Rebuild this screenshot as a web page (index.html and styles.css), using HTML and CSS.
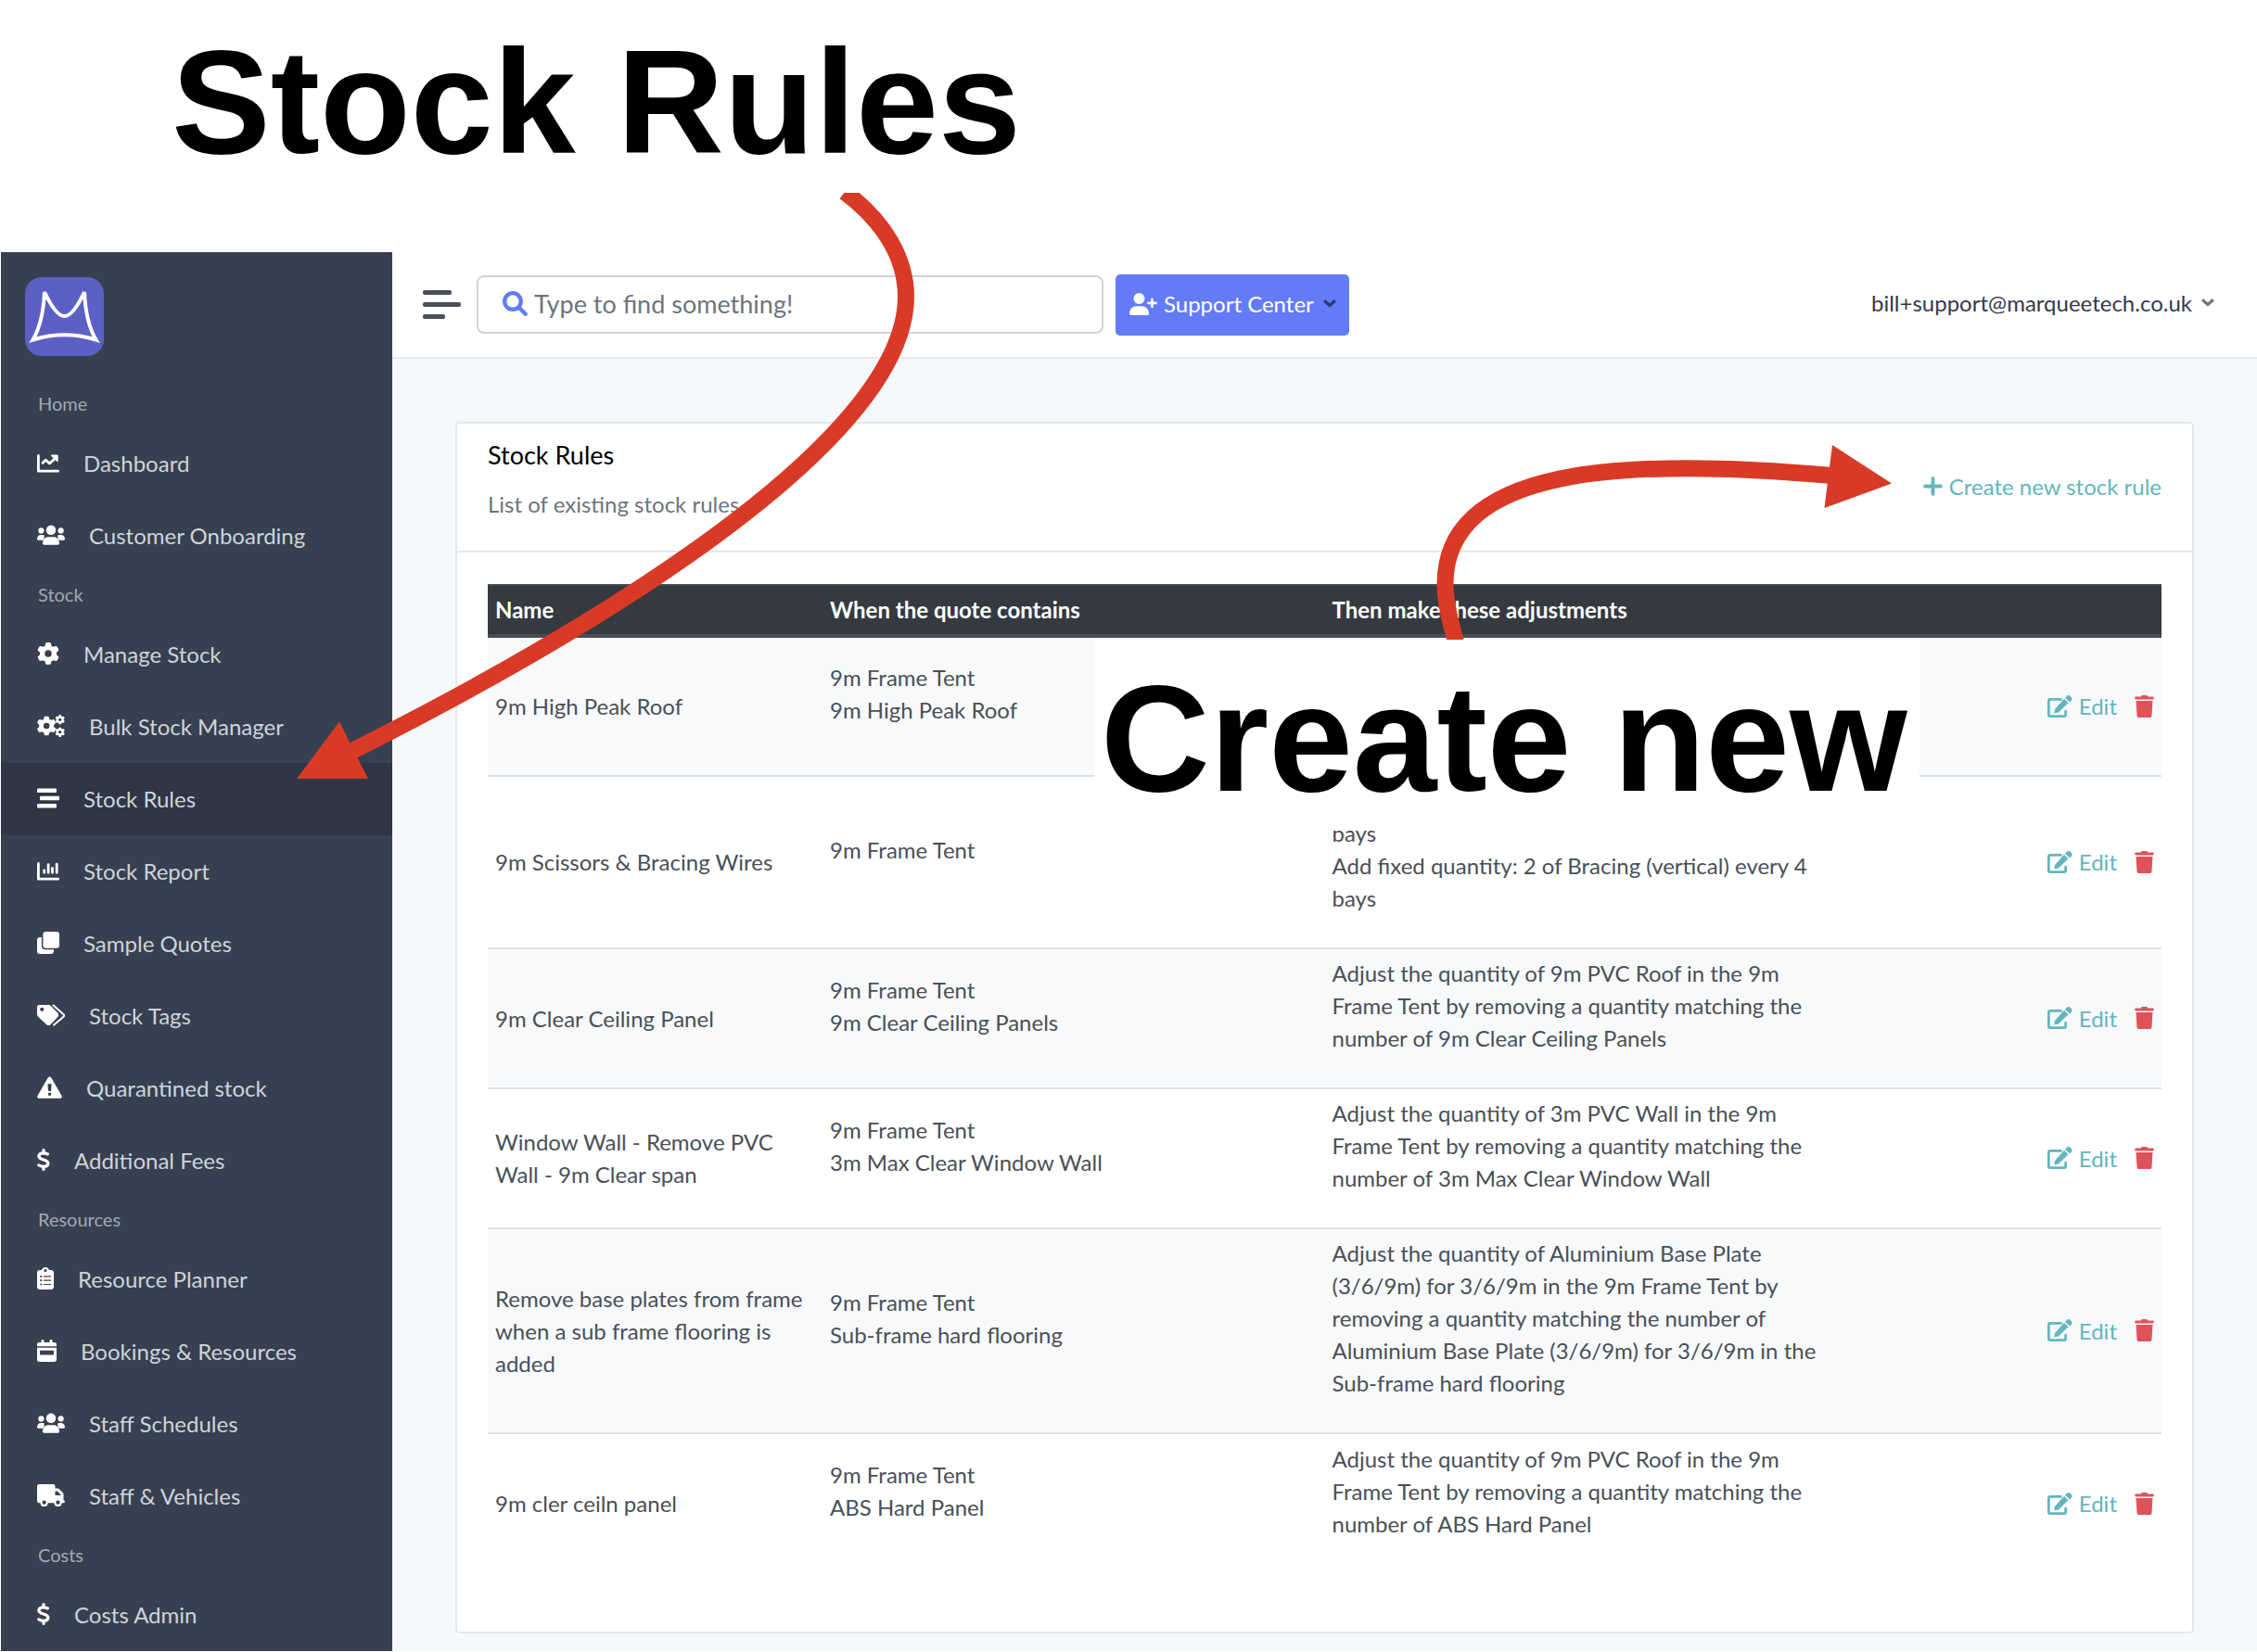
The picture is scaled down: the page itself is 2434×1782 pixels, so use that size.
FILE: index.html
```html
<!DOCTYPE html>
<html lang="en">
<head>
<meta charset="utf-8">
<meta name="viewport" content="width=device-width, initial-scale=1">
<title>Stock Rules</title>
<link rel="stylesheet" href="styles.css">
</head>
<body>
<svg class="sprite" aria-hidden="true">
  <symbol id="i-chart-line" viewBox="0 0 512 512"><path fill="none" stroke="currentColor" stroke-width="60" stroke-linecap="round" stroke-linejoin="round" d="M30 92v360h452"/><path fill="none" stroke="currentColor" stroke-width="60" stroke-linecap="round" stroke-linejoin="round" d="M128 264l70-66 88 76 110-96"/><path fill="currentColor" d="M336 72h128a20 20 0 0 1 20 20v130c0 14-14 20-24 10L326 106c-10-14-6-34 10-34z"/></symbol>
  <symbol id="i-users" viewBox="0 0 640 512"><g fill="currentColor"><circle cx="320" cy="146" r="112"/><circle cx="94" cy="158" r="66"/><circle cx="546" cy="158" r="66"/><path d="M0 352c0-56 36-98 88-98h40c18 0 26 6 40 12-10 40-4 56-14 78-8 16-18 32-28 32H24c-14 0-24-10-24-24zM640 352c0-56-36-98-88-98h-40c-18 0-26 6-40 12 10 40 4 56 14 78 8 16 18 32 28 32h102c14 0 24-10 24-24zM128 448c0-80 48-144 122-144h140c74 0 122 64 122 144 0 22-14 36-36 36H164c-22 0-36-14-36-36z"/></g></symbol>
  <symbol id="i-gear" viewBox="0 0 512 512"><path fill="currentColor" d="M495.9 166.6c3.2 8.7 .5 18.4-6.4 24.6l-43.3 39.4c1.1 8.3 1.7 16.8 1.7 25.4s-.6 17.1-1.7 25.4l43.3 39.4c6.9 6.2 9.6 15.9 6.4 24.6c-4.4 11.9-9.7 23.3-15.8 34.3l-4.7 8.1c-6.6 11-14 21.4-22.1 31.2c-5.9 7.2-15.7 9.6-24.5 6.8l-55.7-17.7c-13.4 10.3-28.2 18.9-44 25.4l-12.5 57.1c-2 9.1-9 16.3-18.2 17.8c-13.8 2.3-28 3.5-42.5 3.5s-28.7-1.2-42.5-3.5c-9.2-1.5-16.2-8.7-18.2-17.8l-12.5-57.1c-15.8-6.5-30.6-15.1-44-25.4L83.1 425.9c-8.8 2.8-18.6 .3-24.5-6.8c-8.1-9.8-15.5-20.2-22.1-31.2l-4.7-8.1c-6.1-11-11.4-22.4-15.8-34.3c-3.2-8.7-.5-18.4 6.4-24.6l43.3-39.4C64.6 273.1 64 264.6 64 256s.6-17.1 1.7-25.4L22.4 191.2c-6.9-6.2-9.6-15.9-6.4-24.6c4.4-11.9 9.7-23.3 15.8-34.3l4.7-8.1c6.6-11 14-21.4 22.1-31.2c5.9-7.2 15.7-9.6 24.5-6.8l55.7 17.7c13.4-10.3 28.2-18.9 44-25.4l12.5-57.1c2-9.1 9-16.3 18.2-17.8C227.3 1.2 241.5 0 256 0s28.7 1.2 42.5 3.5c9.2 1.5 16.2 8.7 18.2 17.8l12.5 57.1c15.8 6.5 30.6 15.1 44 25.4l55.7-17.7c8.8-2.8 18.6-.3 24.5 6.8c8.1 9.8 15.5 20.2 22.1 31.2l4.7 8.1c6.1 11 11.4 22.4 15.8 34.3zM256 336a80 80 0 1 0 0-160 80 80 0 1 0 0 160z"/></symbol>
  <symbol id="i-gears" viewBox="0 0 640 512"><use href="#i-gear" x="-8" y="30" width="450" height="450"/><use href="#i-gear" x="414" y="0" width="226" height="226"/><use href="#i-gear" x="414" y="286" width="226" height="226"/></symbol>
  <symbol id="i-bars" viewBox="0 0 512 512"><g fill="currentColor"><rect y="32" width="448" height="96" rx="24"/><rect x="64" y="208" width="448" height="96" rx="24"/><rect y="384" width="448" height="96" rx="24"/></g></symbol>
  <symbol id="i-chart-col" viewBox="0 0 512 512"><path fill="none" stroke="currentColor" stroke-width="60" stroke-linecap="round" stroke-linejoin="round" d="M30 92v360h452"/><path fill="none" stroke="currentColor" stroke-width="60" stroke-linecap="round" d="M164 256v50M258 122v184M352 200v106M452 108v198"/></symbol>
  <symbol id="i-clone" viewBox="0 0 512 512"><g fill="currentColor"><rect x="136" width="376" height="376" rx="64"/><path d="M0 192c0-36 28-64 64-64h40v200c0 44 36 80 80 80h200v40c0 36-28 64-64 64H64c-36 0-64-28-64-64z"/></g></symbol>
  <symbol id="i-tags" viewBox="0 0 640 512"><path fill="currentColor" fill-rule="evenodd" d="M0 64c0-26 20-44 46-44h220c17 0 33 7 45 19l166 170c24 25 24 65 0 90L308 474c-24 24-66 24-90 0L19 286C7 274 0 258 0 242zM112 80a44 44 0 1 0 0 88 44 44 0 1 0 0-88z"/><path fill="none" stroke="currentColor" stroke-width="44" stroke-linecap="round" stroke-linejoin="round" d="M376 32l232 208c14 14 14 36 0 52L388 480"/></symbol>
  <symbol id="i-warn" viewBox="0 0 576 512"><path fill="currentColor" fill-rule="evenodd" d="M288 12c16 0 30 8 38 22l240 412c18 30-4 62-38 62H48c-34 0-56-32-38-62L250 34c8-14 22-22 38-22zM256 176c-8 0-14 6-12 14l12 136c2 8 6 14 14 14h36c8 0 12-6 14-14l12-136c2-8-4-14-12-14zM288 372a38 38 0 1 0 0 76 38 38 0 1 0 0-76z"/></symbol>
  <symbol id="i-dollar" viewBox="0 0 288 512"><path fill="none" stroke="currentColor" stroke-width="70" stroke-linecap="round" d="M144 36v52M144 424v52M238 126c-30-14-62-24-98-24-66 0-102 30-104 72-4 98 214 68 212 166-2 46-40 74-104 74-42 0-78-14-108-32"/></symbol>
  <symbol id="i-clipboard" viewBox="0 0 384 512"><path fill="currentColor" fill-rule="evenodd" d="M192 0c-41 0-72 26-84 64H60C26 64 0 90 0 122v330c0 34 26 60 60 60h264c34 0 60-26 60-60V122c0-32-26-58-60-58h-48C264 26 233 0 192 0zM192 40a34 34 0 1 1 0 68 34 34 0 1 1 0-68zM70 192h44v36H70zM150 198h170v24H150zM70 284h44v36H70zM150 290h170v24H150zM70 376h44v36H70zM150 382h170v24H150z"/></symbol>
  <symbol id="i-calendar" viewBox="0 0 448 512"><path fill="currentColor" fill-rule="evenodd" d="M96 28c0-38 64-38 64 0v36h128V28c0-38 64-38 64 0v36h48c28 0 48 20 48 48v40H0v-40c0-28 20-48 48-48h48zM0 184h448v276c0 30-22 52-52 52H52c-30 0-52-22-52-52zM84 248c-12 0-20 8-20 20v64c0 12 8 20 20 20h280c12 0 20-8 20-20v-64c0-12-8-20-20-20z"/></symbol>
  <symbol id="i-truck" viewBox="0 0 640 512"><path fill="currentColor" fill-rule="evenodd" d="M48 0h320c28 0 48 20 48 48v48h52c18 0 34 8 46 20l76 76c12 12 18 28 18 44v132c40 0 40 64 0 64h-40a88 88 0 0 1-176 0H250a88 88 0 0 1-176 0H48c-28 0-48-20-48-48V48C0 20 20 0 48 0zM416 160v96h128v-18l-78-78zM162 374a46 46 0 1 0 0 92 46 46 0 1 0 0-92zM480 374a46 46 0 1 0 0 92 46 46 0 1 0 0-92z"/></symbol>
  <symbol id="i-search" viewBox="0 0 512 512"><g fill="none" stroke="currentColor" stroke-width="82" stroke-linecap="round"><circle cx="208" cy="208" r="167"/><path d="M334 334l134 134"/></g></symbol>
  <symbol id="i-user-plus" viewBox="0 0 640 512"><g fill="currentColor"><circle cx="224" cy="128" r="128"/><path d="M0 468c0-92 74-164 166-164h116c92 0 166 72 166 164 0 26-18 44-44 44H44c-26 0-44-18-44-44z"/></g><path fill="none" stroke="currentColor" stroke-width="54" stroke-linecap="round" d="M522 144v176M434 232h176"/></symbol>
  <symbol id="i-chevron" viewBox="0 0 448 288"><path fill="none" stroke="currentColor" stroke-width="104" stroke-linecap="square" d="M76 76l148 132L372 76"/></symbol>
  <symbol id="i-plus" viewBox="0 0 448 448"><path fill="none" stroke="currentColor" stroke-width="84" stroke-linecap="round" d="M224 46v356M46 224h356"/></symbol>
  <symbol id="i-edit" viewBox="0 0 576 512"><path fill="none" stroke="currentColor" stroke-width="58" stroke-linecap="round" stroke-linejoin="round" d="M310 93H62c-18 0-33 15-33 33v324c0 18 15 33 33 33h324c18 0 33-15 33-33V364"/><path fill="currentColor" d="M384 78l96 96-214 210c-10 8-18 12-28 14l-66 12c-10 2-18-6-16-16l14-64c2-10 8-20 14-28zM406 56l36-36c24-24 58-24 80-4l28 28c22 22 22 56 0 80l-38 38z"/></symbol>
  <symbol id="i-trash" viewBox="0 0 448 512"><path fill="currentColor" d="M150 18C156 6 166 0 180 0h88c14 0 24 6 30 18l8 14h110c38 0 38 64 0 64H32c-38 0-38-64 0-64h110zM32 128h384l-22 340c-2 26-22 44-46 44H100c-24 0-44-18-46-44z"/></symbol>
</svg>

<header class="banner">Stock Rules</header>

<div class="app">
  <aside class="sidebar">
    <a class="brand" href="#" aria-label="Home">
      <svg viewBox="0 0 85 85" aria-hidden="true"><rect width="85" height="85" rx="18" fill="#5c60c6"/><path fill="none" stroke="#fff" stroke-width="4" d="M21 16C28 31 36 42 42.500 42S57 31 64 16C65 36 69 55 76.500 67.500 54 60.500 31 60.500 8.500 67.500 16 55 20 36 21 16z"/></svg>
    </a>
    <nav>
      <h2 class="group">Home</h2>
      <a class="item" href="#"><svg class="w24"><use href="#i-chart-line"/></svg>Dashboard</a>
      <a class="item" href="#"><svg class="w30"><use href="#i-users"/></svg>Customer Onboarding</a>
      <h2 class="group">Stock</h2>
      <a class="item" href="#"><svg class="w24"><use href="#i-gear"/></svg>Manage Stock</a>
      <a class="item" href="#"><svg class="w30"><use href="#i-gears"/></svg>Bulk Stock Manager</a>
      <a class="item active" href="#" aria-current="page"><svg class="w24"><use href="#i-bars"/></svg>Stock Rules</a>
      <a class="item" href="#"><svg class="w24"><use href="#i-chart-col"/></svg>Stock Report</a>
      <a class="item" href="#"><svg class="w24"><use href="#i-clone"/></svg>Sample Quotes</a>
      <a class="item" href="#"><svg class="w30"><use href="#i-tags"/></svg>Stock Tags</a>
      <a class="item" href="#"><svg class="w27"><use href="#i-warn"/></svg>Quarantined stock</a>
      <a class="item" href="#"><svg class="w14"><use href="#i-dollar"/></svg>Additional Fees</a>
      <h2 class="group">Resources</h2>
      <a class="item" href="#"><svg class="w18"><use href="#i-clipboard"/></svg>Resource Planner</a>
      <a class="item" href="#"><svg class="w21"><use href="#i-calendar"/></svg>Bookings &amp; Resources</a>
      <a class="item" href="#"><svg class="w30"><use href="#i-users"/></svg>Staff Schedules</a>
      <a class="item" href="#"><svg class="w30"><use href="#i-truck"/></svg>Staff &amp; Vehicles</a>
      <h2 class="group">Costs</h2>
      <a class="item" href="#"><svg class="w14"><use href="#i-dollar"/></svg>Costs Admin</a>
    </nav>
  </aside>

  <div class="content">
    <div class="topbar">
      <button class="menu" type="button" aria-label="Toggle menu"><span></span><span></span><span></span></button>
      <label class="search">
        <svg><use href="#i-search"/></svg>
        <input type="text" placeholder="Type to find something!" aria-label="Search">
      </label>
      <button class="support" type="button"><svg class="w30"><use href="#i-user-plus"/></svg>Support Center<svg class="chev"><use href="#i-chevron"/></svg></button>
      <button class="account" type="button">bill+support@marqueetech.co.uk<svg class="chev"><use href="#i-chevron"/></svg></button>
    </div>

    <main>
      <section class="card">
        <div class="card-head">
          <div class="titles">
            <h1>Stock Rules</h1>
            <p>List of existing stock rules.</p>
          </div>
          <a class="create" href="#"><svg><use href="#i-plus"/></svg>Create new stock rule</a>
        </div>
        <div class="card-body">
          <table>
            <colgroup><col class="c-name"><col class="c-when"><col class="c-then"><col class="c-act"></colgroup>
            <thead>
              <tr><th>Name</th><th>When the quote contains</th><th>Then make these adjustments</th><th></th></tr>
            </thead>
            <tbody>
              <tr>
                <td>9m High Peak Roof</td>
                <td><ul><li>9m Frame Tent</li><li>9m High Peak Roof</li></ul></td>
                <td></td>
                <td><div class="actions"><a class="edit" href="#"><svg><use href="#i-edit"/></svg>Edit</a><button class="del" type="button" aria-label="Delete"><svg><use href="#i-trash"/></svg></button></div></td>
              </tr>
              <tr>
                <td>9m Scissors &amp; Bracing Wires</td>
                <td><ul><li>9m Frame Tent</li></ul></td>
                <td><ul class="adj adj-continued"><li>bays</li><li>Add fixed quantity: 2 of Bracing (vertical) every 4 bays</li></ul></td>
                <td><div class="actions"><a class="edit" href="#"><svg><use href="#i-edit"/></svg>Edit</a><button class="del" type="button" aria-label="Delete"><svg><use href="#i-trash"/></svg></button></div></td>
              </tr>
              <tr>
                <td>9m Clear Ceiling Panel</td>
                <td><ul><li>9m Frame Tent</li><li>9m Clear Ceiling Panels</li></ul></td>
                <td><ul class="adj"><li>Adjust the quantity of 9m PVC Roof in the 9m Frame Tent by removing a quantity matching the number of 9m Clear Ceiling Panels</li></ul></td>
                <td><div class="actions"><a class="edit" href="#"><svg><use href="#i-edit"/></svg>Edit</a><button class="del" type="button" aria-label="Delete"><svg><use href="#i-trash"/></svg></button></div></td>
              </tr>
              <tr>
                <td>Window Wall - Remove PVC Wall - 9m Clear span</td>
                <td><ul><li>9m Frame Tent</li><li>3m Max Clear Window Wall</li></ul></td>
                <td><ul class="adj"><li>Adjust the quantity of 3m PVC Wall in the 9m Frame Tent by removing a quantity matching the number of 3m Max Clear Window Wall</li></ul></td>
                <td><div class="actions"><a class="edit" href="#"><svg><use href="#i-edit"/></svg>Edit</a><button class="del" type="button" aria-label="Delete"><svg><use href="#i-trash"/></svg></button></div></td>
              </tr>
              <tr>
                <td>Remove base plates from frame when a sub frame flooring is added</td>
                <td><ul><li>9m Frame Tent</li><li>Sub-frame hard flooring</li></ul></td>
                <td><ul class="adj"><li>Adjust the quantity of Aluminium Base Plate (3/6/9m) for 3/6/9m in the 9m Frame Tent by removing a quantity matching the number of Aluminium Base Plate (3/6/9m) for 3/6/9m in the Sub-frame hard flooring</li></ul></td>
                <td><div class="actions"><a class="edit" href="#"><svg><use href="#i-edit"/></svg>Edit</a><button class="del" type="button" aria-label="Delete"><svg><use href="#i-trash"/></svg></button></div></td>
              </tr>
              <tr>
                <td>9m cler ceiln panel</td>
                <td><ul><li>9m Frame Tent</li><li>ABS Hard Panel</li></ul></td>
                <td><ul class="adj"><li>Adjust the quantity of 9m PVC Roof in the 9m Frame Tent by removing a quantity matching the number of ABS Hard Panel</li></ul></td>
                <td><div class="actions"><a class="edit" href="#"><svg><use href="#i-edit"/></svg>Edit</a><button class="del" type="button" aria-label="Delete"><svg><use href="#i-trash"/></svg></button></div></td>
              </tr>
            </tbody>
          </table>
        </div>
      </section>
    </main>
  </div>
</div>

<!-- Annotations drawn over the application -->
<div class="callout">Create new</div>
<svg class="arrow arrow-menu" viewBox="310 208 690 640" aria-hidden="true">
  <path class="shaft" d="M911 207C955 240 977 280 977 320C977 493 565 717 378 811"/>
  <path class="tip" d="M320 840l46-61.500 31 61.500z"/>
</svg>
<svg class="arrow arrow-create" viewBox="1540 470 510 220" aria-hidden="true">
  <path class="shaft" d="M1570 692C1562 665 1558.500 645 1558.500 630C1558.500 503 1751 493 1976 513"/>
  <path class="tip" d="M1976 480l64 41.500-72.500 26.500z"/>
</svg>
</body>
</html>
```
FILE: styles.css
```css
* { box-sizing: border-box; }

body {
  margin: 0;
  position: relative;
  background: #fff;
  color: #495057;
  font: 24px/35px Lato, "Noto Sans", sans-serif;
}

h1, h2, p, ul { margin: 0; padding: 0; font-weight: 400; list-style: none; }
a { color: inherit; text-decoration: none; }
button {
  margin: 0;
  padding: 0;
  border: 0;
  background: none;
  color: inherit;
  font: inherit;
  cursor: pointer;
}
svg { display: block; flex: none; }
.sprite { position: absolute; width: 0; height: 0; }

.banner {
  padding: 20px 185px 72px;
  color: #000;
  font: 700 160px/180px "Liberation Sans", Arial, sans-serif;
}

.app { display: flex; padding-left: 1px; }

/* Sidebar */
.sidebar {
  flex: none;
  width: 422px;
  background: #374051;
  color: #ced4da;
}
.brand { display: block; width: 85px; margin: 27px 0 27px 26px; }
.brand svg { width: 85px; height: 85px; }
.group {
  padding: 0 0 2px 40px;
  color: #a3a9b2;
  font-size: 20px;
  line-height: 48px;
}
.item {
  display: flex;
  align-items: center;
  gap: 26px;
  height: 78px;
  padding: 0 0 2px 39px;
}
.item svg { height: 24px; color: #fff; }
.item.active { background: #2f3646; }
.w14 { width: 14px; }
.w18 { width: 18px; }
.w21 { width: 21px; }
.w24 { width: 24px; }
.w27 { width: 27px; }
.w30 { width: 30px; }

/* Top bar */
.content { flex: 1; min-width: 0; background: #f5f9fc; }
.topbar {
  display: flex;
  align-items: center;
  height: 115px;
  padding: 0 46px 0 33px;
  border-bottom: 2px solid #e6e9f1;
  background: #fff;
}
.menu { display: grid; gap: 8px; width: 41px; margin-right: 17px; }
.menu span { width: 31px; height: 5px; border-radius: 2px; background: #495057; }
.menu span:nth-child(2) { width: 41px; }
.menu span:nth-child(3) { width: 24px; }
.search {
  display: flex;
  align-items: center;
  gap: 7px;
  width: 676px;
  height: 63px;
  padding: 0 26px 2px;
  border: 2px solid #ced4da;
  border-radius: 8px;
}
.search svg { width: 27px; height: 27px; color: #637bf7; }
.search input {
  flex: 1;
  min-width: 0;
  padding: 0;
  border: 0;
  outline: 0;
  background: none;
  color: #495057;
  font: 27px/36px Lato, "Noto Sans", sans-serif;
}
.search input::placeholder { color: #6c757d; opacity: 1; }
.support {
  display: flex;
  align-items: center;
  gap: 7px;
  height: 66px;
  margin-left: 13px;
  padding: 0 14px 2px 15px;
  border-radius: 5px;
  background: #637bf7;
  color: #fff;
}
.support svg { height: 24px; }
.support .chev, .account .chev { width: 14px; height: 9px; }
.support .chev { margin-left: 3px; color: #2d3a7c; }
.account {
  display: flex;
  align-items: center;
  gap: 10px;
  margin-left: auto;
  padding-bottom: 5px;
  color: #323a4e;
}
.account .chev { color: #777; }

/* Card */
main { padding: 68px 68px 17px; }
.card { border: 2px solid #e3e8f1; border-radius: 5px; background: #fff; }
.card-head {
  display: flex;
  align-items: center;
  justify-content: space-between;
  padding: 16px 33px 33px;
  border-bottom: 2px solid #e3e8f1;
}
.titles { display: grid; gap: 18px; }
.titles h1 { color: #000; font-size: 27px; }
.titles p { color: #6c757d; }
.create { display: flex; align-items: center; gap: 7px; margin-top: 14px; color: #63b6bd; }
.create svg { width: 21px; height: 21px; }
.card-body { padding: 34px 33px 63px; }

/* Table */
table { width: 100%; border-collapse: collapse; table-layout: fixed; }
.c-name { width: 20%; }
.c-when { width: 30%; }
.c-then { width: 30%; }
.c-act { width: 20%; }
th {
  padding: 8px 8px 9px;
  border-top: 2px solid #454d55;
  border-bottom: 4px solid #454d55;
  background: #343a40;
  color: #fff;
  font-weight: 700;
  text-align: left;
}
tbody tr { height: 151px; }
td { padding: 8px 8px 9px; border-top: 2px solid #dee2e6; vertical-align: middle; }
tbody tr:first-child td { border-top: 0; }
tbody tr:nth-child(odd) { background: #f8f9fb; }
td ul { margin-bottom: 27px; }
.adj { max-width: 526px; }
.adj-continued { padding-top: 35px; }
.actions { display: flex; align-items: center; justify-content: flex-end; gap: 19px; }
.edit { display: flex; align-items: center; gap: 7px; color: #63b6bd; }
.edit svg { width: 27px; height: 24px; }
.del { color: #e0525a; }
.del svg { width: 21px; height: 24px; }

/* Annotations */
.callout {
  position: absolute;
  top: 690px;
  left: 1180px;
  width: 890px;
  padding: 17px 0 9px 7px;
  background: #fff;
  color: #000;
  font: 700 163px/180px "Liberation Sans", Arial, sans-serif;
  white-space: nowrap;
}
.arrow { position: absolute; overflow: hidden; }
.arrow-menu { top: 208px; left: 310px; width: 690px; height: 640px; }
.arrow-create { top: 470px; left: 1540px; width: 510px; height: 220px; }
.shaft { fill: none; stroke: #d93a26; stroke-width: 18; }
.tip { fill: #d93a26; }
```
